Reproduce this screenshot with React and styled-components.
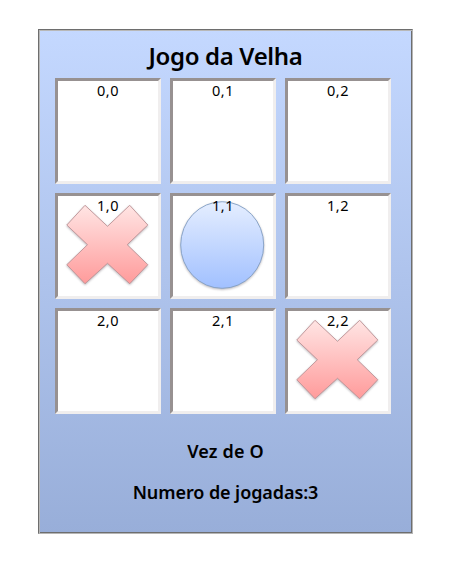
import React from "react";
import styled, { createGlobalStyle } from "styled-components";

const GlobalStyle = createGlobalStyle`
  body {
    margin: 0;
    background: #fff;
  }
`;

const Panel = styled.main`
  box-sizing: border-box;
  width: 375px;
  height: 505px;
  margin: 29px 0 0 38px;
  padding: 9px 15px 0;
  border: 1px solid;
  border-color: #6e6e6e #b5b5b5 #b5b5b5 #6e6e6e;
  box-shadow: inset 1px 1px #b8b8b8, inset -1px -1px #6e6e6e;
  background: linear-gradient(#c4d8ff, #98aed9);
  color: #000;
  font-family: "Trebuchet MS", "Noto Sans", sans-serif;
  display: flex;
  flex-direction: column;
  align-items: center;
`;

const Title = styled.h1`
  margin: 0;
  height: 39px;
  font-size: 24px;
  line-height: 34px;
  font-weight: 600;
  letter-spacing: ${(p) => p.$tracking}px;
  white-space: nowrap;
`;

const Board = styled.section`
  display: grid;
  grid-template-columns: repeat(3, 106px);
  grid-auto-rows: 106px;
  gap: 9px;
  margin-right: 5px;
`;

const Cell = styled.div`
  position: relative;
  box-sizing: border-box;
  border: 3px solid;
  border-color: #979191 #f0eeee #f0eeee #979191;
  background: #fff;
  text-align: center;
`;

const Coordinate = styled.span`
  position: relative;
  display: block;
  font-size: 14.5px;
  line-height: 19px;
  letter-spacing: 0.5px;
`;

const Mark = styled.svg`
  position: absolute;
  top: 0;
  left: 0;
  filter: drop-shadow(0 1px 1px rgba(60, 50, 60, 0.35));
`;

const Status = styled.p`
  margin: ${(p) => p.$top}px 0 0;
  font-size: 18px;
  line-height: 24px;
  font-weight: 600;
  letter-spacing: ${(p) => p.$tracking}px;
  white-space: nowrap;
`;

function Cross({ id }) {
  return (
    <Mark width="100" height="100" viewBox="0 0 100 100">
      <defs>
        <linearGradient id={id} x1="0" y1="0" x2="0" y2="1">
          <stop offset="0" stopColor="#ffe5e4" />
          <stop offset="1" stopColor="#ff9b9b" />
        </linearGradient>
      </defs>
      <path
        d="M27 9.3 49.5 30.3 71.7 9.3 89.8 29 69.2 48.7 89.8 68.7 71.7 87.7 49.5 67.3 27 87.7 8.8 68.7 29.5 48.7 8.8 29Z"
        fill={`url(#${id})`}
        stroke="#bd9396"
        strokeWidth="0.9"
      />
    </Mark>
  );
}

function Nought({ id }) {
  return (
    <Mark width="100" height="100" viewBox="0 0 100 100">
      <defs>
        <linearGradient id={id} x1="0" y1="0" x2="0" y2="1">
          <stop offset="0" stopColor="#e5eeff" />
          <stop offset="1" stopColor="#a1c0ff" />
        </linearGradient>
      </defs>
      <ellipse
        cx="49.2"
        cy="49"
        rx="41.5"
        ry="43.3"
        fill={`url(#${id})`}
        stroke="#829fc5"
        strokeWidth="0.9"
      />
    </Mark>
  );
}

const board = [
  [null, null, null],
  ["X", "O", null],
  [null, null, "X"],
];

export default function App() {
  return (
    <>
      <GlobalStyle />
      <Panel>
        <Title $tracking={-0.35}>Jogo da Velha</Title>
        <Board>
          {board.flatMap((row, r) =>
            row.map((mark, c) => (
              <Cell key={`${r}${c}`}>
                {mark === "X" && <Cross id={`cross${r}${c}`} />}
                {mark === "O" && <Nought id={`nought${r}${c}`} />}
                <Coordinate>{`${r},${c}`}</Coordinate>
              </Cell>
            ))
          )}
        </Board>
        <Status $top={25} $tracking={0.15}>Vez de O</Status>
        <Status $top={17} $tracking={-0.08}>Numero de jogadas:3</Status>
      </Panel>
    </>
  );
}
